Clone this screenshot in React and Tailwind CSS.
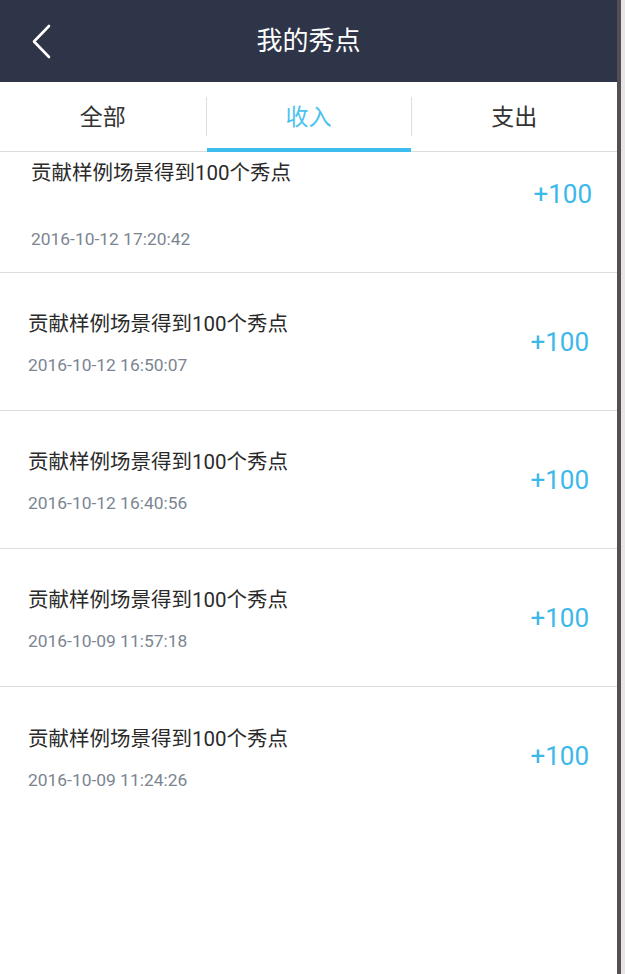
export default function App() {
  const rows = [
    { t: "2016-10-12 16:50:07" },
    { t: "2016-10-12 16:40:56" },
    { t: "2016-10-09 11:57:18" },
    { t: "2016-10-09 11:24:26" },
  ];
  const font = { fontFamily: 'Roboto, "Noto Sans CJK SC", sans-serif' };
  return (
    <div className="flex h-[974px] w-[625px] bg-white" style={font}>
      <div className="flex w-[617px] flex-col">
        <div className="relative flex h-[82px] items-center justify-center bg-[#2f3548]">
          <svg className="absolute left-[31px] top-[24px]" width="22" height="36" viewBox="0 0 22 36">
            <path d="M18 2 L3 17.5 L18 33" fill="none" stroke="#ffffff" strokeWidth="2.6" strokeLinecap="round" strokeLinejoin="round" />
          </svg>
          <span className="text-[26px] leading-none text-white">我的秀点</span>
        </div>
        <div className="flex h-[70px] border-b border-[#dcdcdc]">
          <div className="flex flex-1 items-center justify-center pt-[3px] text-[23px] text-[#333]">全部</div>
          <div className="my-[15px] w-px bg-[#dedede]" />
          <div className="relative flex w-[204px] items-center justify-center pt-[3px] text-[23px] text-[#4cc2ef]">
            收入
            <div className="absolute bottom-[-1px] left-0 right-0 h-[4px] bg-[#3cbdee]" />
          </div>
          <div className="my-[15px] w-px bg-[#dedede]" />
          <div className="flex flex-1 items-center justify-center pt-[3px] text-[23px] text-[#333]">支出</div>
        </div>
        <div className="flex h-[121px] items-start border-b border-[#dddddd] pl-[31px] pr-[25px]">
          <div className="flex flex-1 flex-col">
            <span className="mt-[7px] text-[20.5px] leading-[28px] text-[#2a2a2a]">贡献样例场景得到100个秀点</span>
            <span className="mt-[42px] text-[17.4px] leading-[20px] text-[#7b8591]">2016-10-12 17:20:42</span>
          </div>
          <span className="mt-[27px] text-[26px] leading-[30px] text-[#3cb8ea]">+100</span>
        </div>
        {rows.map((r, i) => (
          <div
            key={i}
            className={`flex h-[138px] items-center pl-[28px] pr-[28px] ${i < 3 ? "border-b border-[#dddddd]" : ""}`}
          >
            <div className="flex flex-1 flex-col pt-[2px]">
              <span className="text-[20.5px] leading-[28px] text-[#2a2a2a]">贡献样例场景得到100个秀点</span>
              <span className="mt-[17px] text-[17.4px] leading-[20px] text-[#7b8591]">{r.t}</span>
            </div>
            <span className="text-[26px] leading-[30px] text-[#3cb8ea]">+100</span>
          </div>
        ))}
      </div>
      <div className="w-[4px] bg-[#564e52]" />
      <div className="w-[4px] bg-[#e6e6e6]" />
    </div>
  );
}
